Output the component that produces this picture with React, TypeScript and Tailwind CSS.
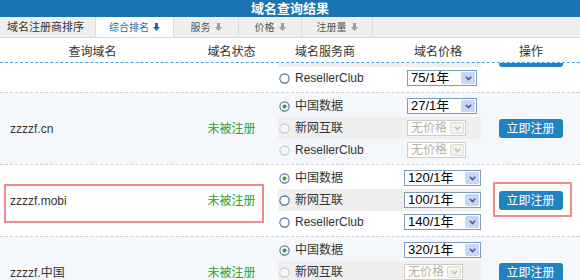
import React from "react";

const F = "font-['Liberation_Sans','Noto_Sans_CJK_SC',sans-serif]";

function Arrow({ active }: { active?: boolean }) {
  return (
    <svg width="7" height="8" viewBox="0 0 7 8" className="ml-[4px]">
      <rect x="2" y="0" width="3" height="4" fill={active ? "#1a6fb0" : "#a0a0a0"} />
      <polygon points="0,4 7,4 3.5,8" fill={active ? "#1a6fb0" : "#a0a0a0"} />
    </svg>
  );
}

function Radio({ kind }: { kind: "on" | "off" | "dis" }) {
  const stroke = kind === "dis" ? "#c8c8c8" : kind === "on" ? "#55779f" : "#3f6694";
  return (
    <svg width="11" height="11" viewBox="0 0 11 11">
      <circle cx="5.5" cy="5.5" r="4.6" fill={kind === "dis" ? "#f5f5f5" : "#ffffff"} stroke={stroke} strokeWidth="1.1" />
      {kind === "on" && <circle cx="5.5" cy="5.5" r="2" fill="#2ea52e" />}
    </svg>
  );
}

function Sel({ text, w, dis }: { text: string; w: string; dis?: boolean }) {
  return (
    <div
      className={`flex h-[16px] items-stretch border bg-white ${w} ${
        dis ? "border-[#cfcdc2]" : "border-[#7f9db9]"
      }`}
    >
      <div
        className={`flex-1 pl-[3px] ${
          dis ? "text-[12px] leading-[14px] text-[#b5b2a5]" : "text-[13px] leading-[14px] text-black"
        }`}
      >
        {text}
      </div>
      <div
        className={`m-[1px] flex w-[14px] items-center justify-center rounded-[2px] ${
          dis ? "bg-[#f1f1ee] border border-[#dedbd0]" : "bg-[#c6d6fb]"
        }`}
      >
        <svg width="7" height="5" viewBox="0 0 7 5">
          <polyline
            points="0.8,0.8 3.5,3.6 6.2,0.8"
            fill="none"
            stroke={dis ? "#c2c2c2" : "#4a5e88"}
            strokeWidth="1.6"
          />
        </svg>
      </div>
    </div>
  );
}

type Sub = { name: string; radio: "on" | "off" | "dis"; price: string; dis?: boolean; w: string };

function SubRow({ s, gray, pl }: { s: Sub; gray?: boolean; pl: string }) {
  return (
    <div className={`flex h-[22px] shrink-0 items-center ${gray ? "bg-[#efefef]" : ""}`}>
      <div className="flex w-[125px] items-center gap-[5px] pl-[1px] text-[12px] text-[#333]">
        <Radio kind={s.radio} />
        <span>{s.name}</span>
      </div>
      <div className={`flex items-center ${pl}`}>
        <Sel text={s.price} w={s.w} dis={s.dis} />
      </div>
    </div>
  );
}

function Row({
  bg,
  domain,
  subs,
  pl,
  highlight,
}: {
  bg: string;
  domain: string;
  subs: Sub[];
  pl: string;
  highlight?: boolean;
}) {
  return (
    <div className={`relative flex h-[72px] shrink-0 border-t border-dashed border-[#cfcfcf] ${bg}`}>
      <div className="flex w-[185px] items-center pl-[10px] text-[12px] text-[#333]">{domain}</div>
      <div className="flex w-[93px] items-center justify-center text-[12px] text-[#2aa02a]">未被注册</div>
      <div className="flex w-[203px] flex-col pt-[2px]">
        {subs.map((s, i) => (
          <SubRow key={i} s={s} gray={i === 1} pl={pl} />
        ))}
      </div>
      <div className="flex flex-1 items-center justify-center">
        <div className="flex h-[19px] w-[64px] items-center justify-center rounded-[3px] bg-[#2183c4] text-[12px] text-white">
          立即注册
        </div>
      </div>
      {highlight && (
        <>
          <div className="absolute left-[4px] top-[19px] h-[39px] w-[260px] border-2 border-[#f28b8b]" />
          <div className="absolute left-[493px] top-[17px] h-[35px] w-[79px] border-2 border-[#f28b8b]" />
        </>
      )}
    </div>
  );
}

export default function App() {
  return (
    <div className={`h-[280px] w-[580px] overflow-hidden bg-white ${F}`}>
      <div className="h-[17px] bg-[#1b74b2] text-center text-[13px] font-bold leading-[17px] text-white">
        域名查询结果
      </div>
      <div className="flex h-[21px] border-b border-[#dadada] bg-[#efefef] text-[10px] text-[#555]">
        <div className="flex w-[95px] items-center pl-[7px] text-[11px] text-[#333]">域名注册商排序</div>
        <div className="flex w-[78px] items-center justify-center border-l border-[#dcdcdc] bg-white text-[#1a6fb0]">
          综合排名
          <Arrow active />
        </div>
        <div className="flex w-[65px] items-center justify-center border-l border-[#dcdcdc]">
          服务
          <Arrow />
        </div>
        <div className="flex w-[63px] items-center justify-center border-l border-[#dcdcdc]">
          价格
          <Arrow />
        </div>
        <div className="flex w-[71px] items-center justify-center border-l border-[#dcdcdc]">
          注册量
          <Arrow />
        </div>
        <div className="flex-1 border-l border-[#dcdcdc]" />
      </div>
      <div className="flex h-[25px] items-center border-b border-dashed border-[#4fa3dc] pt-[4px] text-[12px] text-[#333]">
        <div className="w-[185px] text-center">查询域名</div>
        <div className="w-[93px] text-center">域名状态</div>
        <div className="w-[94px] text-center">域名服务商</div>
        <div className="w-[132px] text-center">域名价格</div>
        <div className="w-[54px] text-center">操作</div>
      </div>
      <div className="flex h-[218px] flex-col overflow-hidden">
        <div className="flex h-[29px] shrink-0 bg-white">
          <div className="w-[278px]" />
          <div className="flex w-[203px] flex-col">
            <div className="h-[4px] bg-[#efefef]" />
            <SubRow
              s={{ name: "ResellerClub", radio: "off", price: "75/1年", w: "w-[70px]" }}
              pl="pl-[4px]"
            />
          </div>
          <div className="flex flex-1 justify-center">
            <div className="h-[4px] w-[64px] rounded-b-[3px] bg-[#2183c4]" />
          </div>
        </div>
        <Row
          bg="bg-[#f4f8fc]"
          domain="zzzzf.cn"
          pl="pl-[4px]"
          subs={[
            { name: "中国数据", radio: "on", price: "27/1年", w: "w-[70px]" },
            { name: "新网互联", radio: "dis", price: "无价格", dis: true, w: "w-[59px]" },
            { name: "ResellerClub", radio: "dis", price: "无价格", dis: true, w: "w-[59px]" },
          ]}
        />
        <Row
          bg="bg-white"
          domain="zzzzf.mobi"
          pl="pl-[1px]"
          highlight
          subs={[
            { name: "中国数据", radio: "on", price: "120/1年", w: "w-[77px]" },
            { name: "新网互联", radio: "off", price: "100/1年", w: "w-[77px]" },
            { name: "ResellerClub", radio: "off", price: "140/1年", w: "w-[77px]" },
          ]}
        />
        <Row
          bg="bg-[#f4f8fc]"
          domain="zzzzf.中国"
          pl="pl-[1px]"
          subs={[
            { name: "中国数据", radio: "on", price: "320/1年", w: "w-[77px]" },
            { name: "新网互联", radio: "dis", price: "无价格", dis: true, w: "w-[59px]" },
            { name: "ResellerClub", radio: "dis", price: "无价格", dis: true, w: "w-[59px]" },
          ]}
        />
      </div>
    </div>
  );
}
